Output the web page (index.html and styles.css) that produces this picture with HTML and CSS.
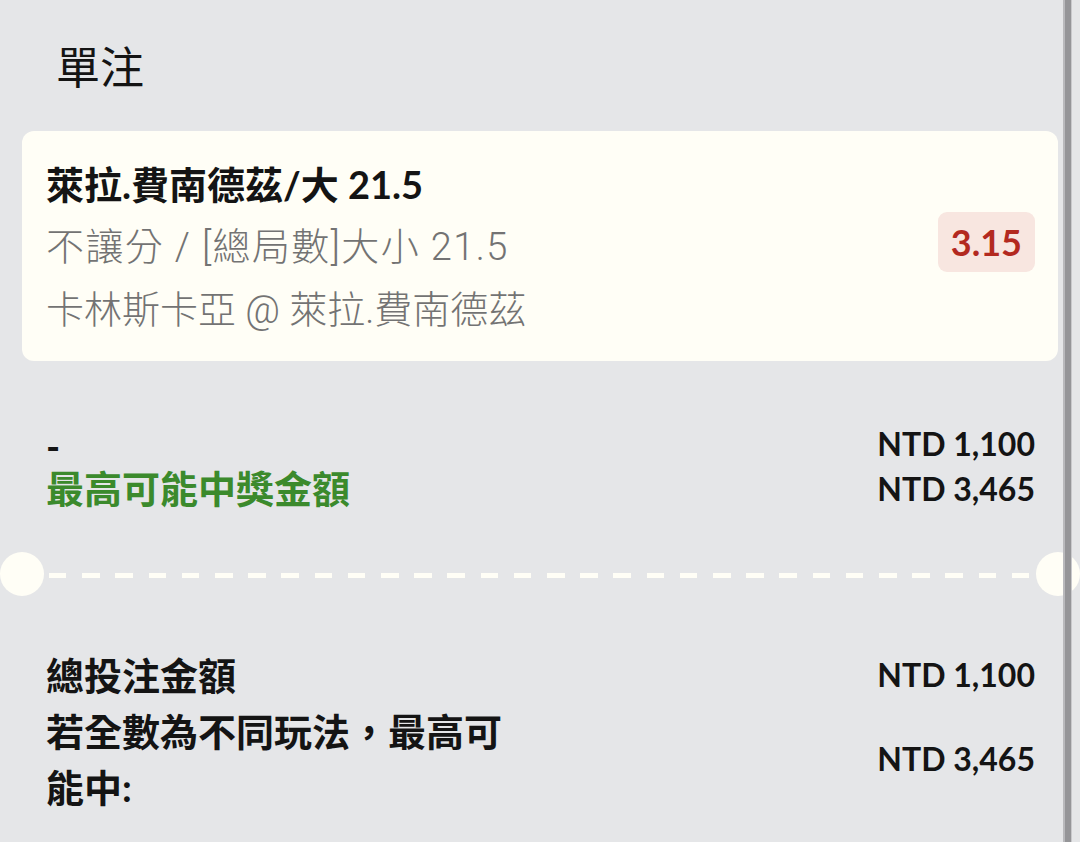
FILE: index.html
```html
<!DOCTYPE html>
<html lang="zh-Hant">
<head>
  <meta charset="UTF-8">
  <title>單注</title>
  <link rel="stylesheet" href="styles.css">
</head>
<body>
  <div class="slip">
    <h2 class="slip-title">單注</h2>

    <div class="bet-card">
      <div class="bet-info">
        <div class="bet-pick">萊拉.費南德茲/大 21.5</div>
        <div class="bet-line bet-market">不讓分 / [總局數]大小 21.5</div>
        <div class="bet-line">卡林斯卡亞 @ 萊拉.費南德茲</div>
      </div>
      <div class="bet-odds">3.15</div>
    </div>

    <div class="stake-row">
      <div class="stake-labels">
        <div>-</div>
        <div class="win-label">最高可能中獎金額</div>
      </div>
      <div class="stake-values">
        <div>NTD 1,100</div>
        <div>NTD 3,465</div>
      </div>
    </div>

    <div class="ticket-divider">
      <span class="notch"></span>
      <span class="dash-line"></span>
      <span class="notch"></span>
    </div>

    <div class="summary">
      <div class="summary-row">
        <div class="summary-label">總投注金額</div>
        <div class="summary-value">NTD 1,100</div>
      </div>
      <div class="summary-row">
        <div class="summary-label">若全數為不同玩法，最高可能中:</div>
        <div class="summary-value">NTD 3,465</div>
      </div>
    </div>
  </div>

  <div class="scroll-edge"></div>
</body>
</html>
```

FILE: styles.css
```css
/* Reset */
body, h2 {
  margin: 0;
  padding: 0;
}

body {
  font-family: Lato, "Noto Sans CJK TC", sans-serif;
  background-color: #e5e6e8;
  color: #141414;
  width: 1080px;
  height: 842px;
  overflow: hidden;
}

.slip {
  padding-top: 35px;
}

.slip-title {
  font-family: "Noto Sans CJK TC", sans-serif;
  font-size: 44px;
  font-weight: 400;
  line-height: 60px;
  margin-left: 56px;
}

/* selected bet */
.bet-card {
  display: flex;
  align-items: center;
  margin: 36px 22px 0;
  padding: 22px 23px 19px 24px;
  background-color: #fffef6;
  border-radius: 12px;
}
.bet-info {
  flex: 1;
  font-size: 38px;
  line-height: 63px;
}
.bet-pick {
  font-weight: 700;
}
.bet-line {
  font-family: Roboto, "Noto Sans CJK TC", sans-serif;
  font-weight: 300;
  color: #737373;
}
.bet-market {
  letter-spacing: 1.4px;
}
.bet-odds {
  margin-bottom: 12px;
  padding: 0 13px;
  font-size: 36px;
  font-weight: 700;
  line-height: 60px;
  color: #b3291f;
  background-color: #f8e6e0;
  border-radius: 9px;
}

/* stake + possible win */
.stake-row {
  display: flex;
  justify-content: space-between;
  margin-top: 60px;
  padding: 0 45px 0 46px;
  line-height: 45px;
  font-weight: 700;
}
.stake-labels {
  font-size: 38px;
}
.stake-labels div:first-child {
  padding-top: 5px;
  line-height: 40px;
}
.win-label {
  color: #3b8a2c;
}
.stake-values {
  font-size: 32px;
  text-align: right;
}

/* ticket tear line */
.ticket-divider {
  display: flex;
  align-items: center;
  margin-top: 41px;
}
.notch {
  width: 44px;
  height: 44px;
  border-radius: 50%;
  background-color: #fffef6;
}
.dash-line {
  flex: 1;
  height: 5px;
  margin: 2px 6px 0 5px;
  background: repeating-linear-gradient(to right, #fffef6 0 17.5px, transparent 17.5px 33.2px);
}

/* totals */
.summary {
  margin-top: 51px;
  padding: 0 45px 0 46px;
  font-weight: 700;
}
.summary-row {
  display: flex;
  justify-content: space-between;
  align-items: center;
  line-height: 56px;
}
.summary-label {
  max-width: 480px;
  font-size: 38px;
}
.summary-value {
  font-size: 32px;
}

.scroll-edge {
  position: fixed;
  top: 0;
  right: 8px;
  width: 9px;
  height: 100%;
  background: linear-gradient(to right, #b9b9bc 0 2px, #959598 2px 8px, #c9c9cc 8px);
}
```
